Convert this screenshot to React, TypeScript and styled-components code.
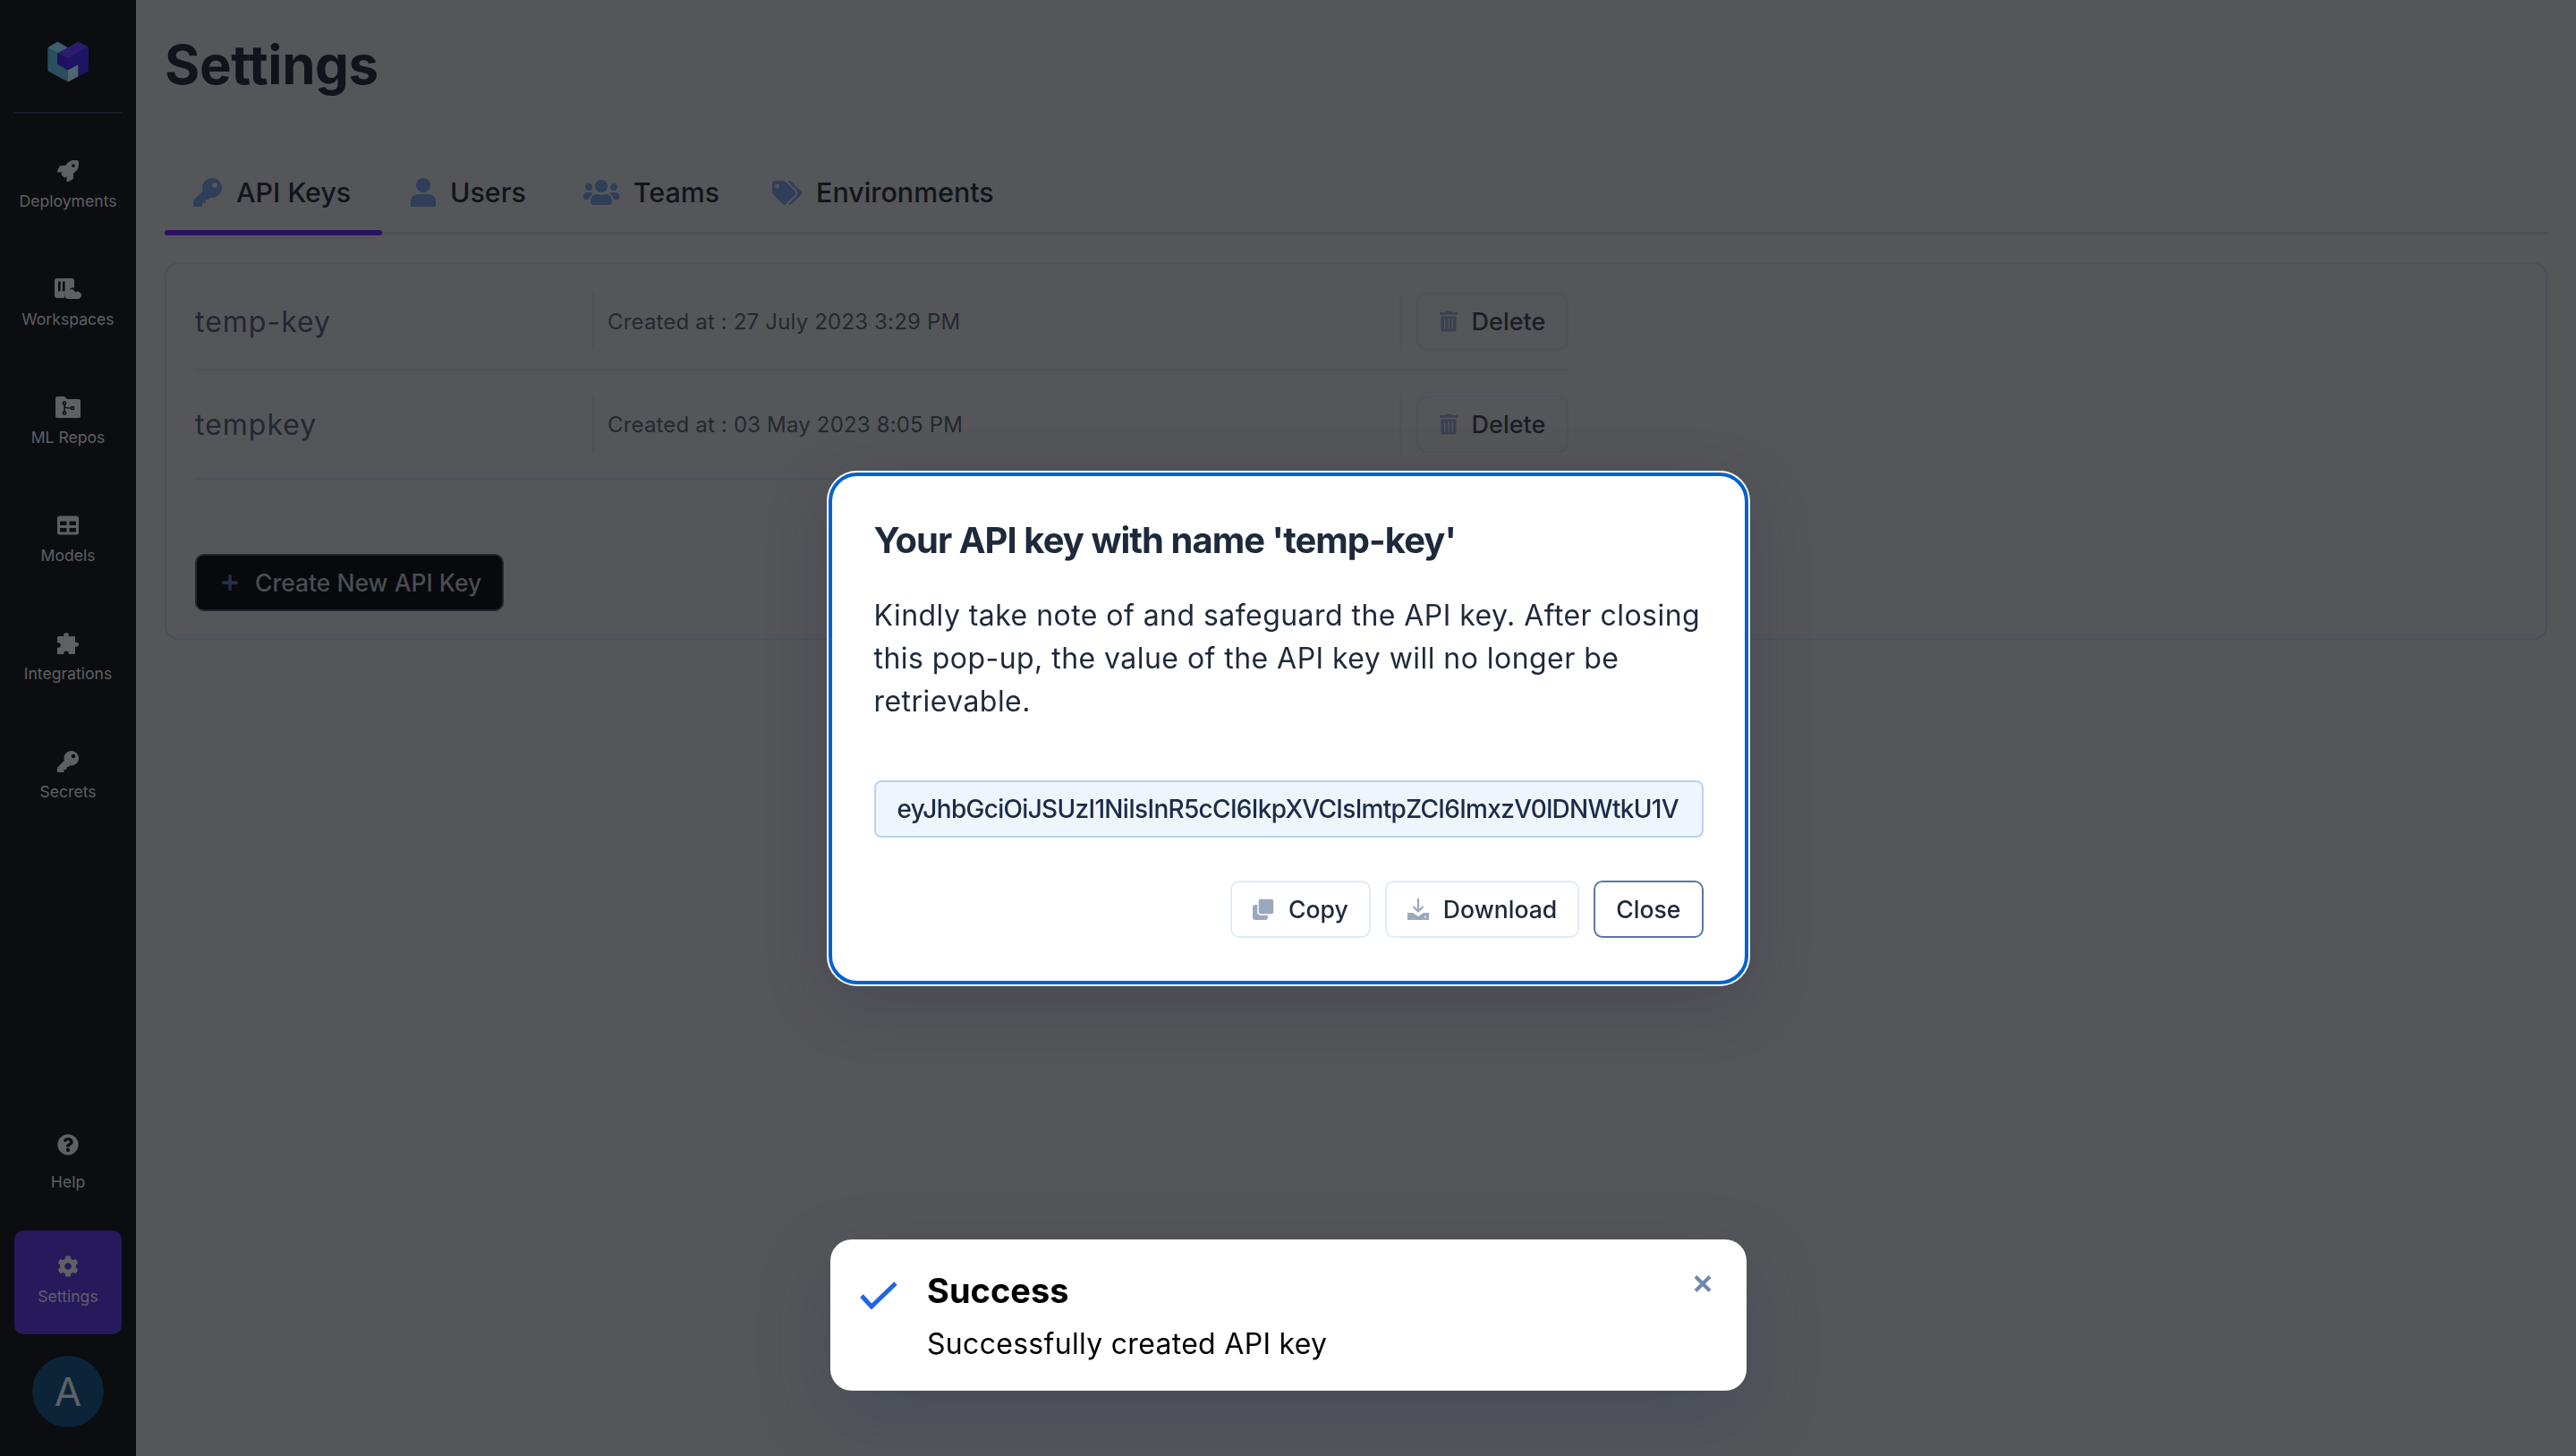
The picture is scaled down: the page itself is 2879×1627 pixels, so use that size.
import React from "react";
import styled, { createGlobalStyle } from "styled-components";
import { FaRocket, FaKey, FaTable, FaQuestionCircle, FaCog, FaUsers, FaTags, FaTrashAlt, FaPlus } from "react-icons/fa";

const Global = createGlobalStyle`
  html, body { margin: 0; padding: 0; height: 100%; background: #55565a; }
  * { box-sizing: border-box; }
  body { font-family: Inter, "Liberation Sans", sans-serif; overflow: hidden; }
`;

const Shell = styled.div`
  display: flex;
  width: 100vw;
  height: 100vh;
  background: #55565a;
`;

const Sidebar = styled.aside`
  width: 152px;
  flex: none;
  display: flex;
  flex-direction: column;
  align-items: center;
  padding: 46px 16px 32px;
  background: #0c0d11;
`;

const LogoMark = styled.svg`
  width: 46px;
  height: 46px;
  flex: none;
`;

const SideRule = styled.div`
  width: 120px;
  height: 2px;
  margin: 33px 0 24px;
  background: #171c27;
  flex: none;
`;

const NavGroup = styled.nav`
  display: flex;
  flex-direction: column;
  gap: 16px;
`;

const NavItem = styled.a<{ $active?: boolean; $gap?: number }>`
  width: 120px;
  height: 116px;
  padding-top: 28px;
  display: flex;
  flex-direction: column;
  align-items: center;
  gap: ${(p) => p.$gap ?? 11}px;
  border-radius: 10px;
  color: #5f6064;
  font-size: 17.6px;
  line-height: 22px;
  background: ${(p) => (p.$active ? "#261a5d" : "transparent")};
  svg { height: 24px; width: auto; flex: none; display: block; }
`;

const BottomGroup = styled.div`
  margin-top: auto;
  display: flex;
  flex-direction: column;
  align-items: center;
  gap: 20px;
`;

const Avatar = styled.div`
  width: 80px;
  height: 80px;
  margin-top: 4px;
  border-radius: 50%;
  display: flex;
  align-items: center;
  justify-content: center;
  background: #0c2438;
  color: #5e6266;
  font-size: 44px;
  font-weight: 400;
`;

const Main = styled.main`
  flex: 1;
  min-width: 0;
  padding: 0 32px;
`;

const Title = styled.h1`
  margin: 0;
  padding-top: 36px;
  font-size: 60px;
  line-height: 72px;
  font-weight: 700;
  color: #12141c;
  letter-spacing: -0.4px;
`;

const TabBar = styled.div`
  display: flex;
  margin-top: 71px;
  height: 82px;
  border-bottom: 2px solid #4a5058;
`;

const Tab = styled.div<{ $active?: boolean; $endPad?: number }>`
  display: flex;
  align-items: center;
  gap: 16px;
  height: 82px;
  min-width: ${(p) => (p.$active ? "243px" : "0")};
  padding: 0 ${(p) => p.$endPad ?? 32}px 10px 32px;
  font-size: 30.4px;
  font-weight: 500;
  color: #12141c;
  position: relative;
  svg { color: #2f3e59; flex: none; display: block; }
  ${(p) =>
    p.$active
      ? `&::after { content: ""; position: absolute; left: 0; right: 0; bottom: -2px; height: 6px; border-radius: 3px; background: #2a1262; }`
      : ""}
`;

const Card = styled.section`
  margin-top: 32px;
  height: 422px;
  border: 2px solid #49515b;
  border-radius: 16px;
  padding: 11px 32px 0;
`;

const KeyRow = styled.div<{ $h: number }>`
  display: flex;
  align-items: center;
  width: 1535px;
  height: ${(p) => p.$h}px;
  border-bottom: 2px solid #4c525b;
`;

const KeyName = styled.div`
  width: 444px;
  font-size: 32px;
  color: #232733;
  letter-spacing: 1px;
`;

const Created = styled.div`
  width: 904px;
  height: 64px;
  display: flex;
  align-items: center;
  padding-left: 15px;
  border-left: 2px solid #4d535c;
  border-right: 2px solid #4d535c;
  font-size: 24px;
  color: #25282f;
  letter-spacing: 0.17px;
`;

const DeleteButton = styled.div`
  width: 170px;
  height: 64px;
  margin-left: 17px;
  display: flex;
  align-items: center;
  justify-content: center;
  gap: 16px;
  border: 2px solid #4d535c;
  border-radius: 12px;
  font-size: 27px;
  font-weight: 500;
  color: #1b1d26;
  svg { width: 20px; height: 24px; color: #3a4150; }
`;

const CreateButton = styled.div`
  margin-top: 83px;
  width: 345px;
  height: 64px;
  display: flex;
  align-items: center;
  gap: 18px;
  padding-left: 27px;
  background: #08090c;
  border: 2px solid #22252e;
  border-radius: 10px;
  color: #4a4d52;
  font-size: 26.5px;
  font-weight: 500;
  svg { width: 20px; height: 20px; color: #252e45; flex: none; }
`;

const Overlay = styled.div`
  position: fixed;
  inset: 0;
  display: flex;
  align-items: center;
  justify-content: center;
`;

const Modal = styled.div`
  width: 1028px;
  height: 572px;
  padding: 48px 46px 0 47px;
  background: #fff;
  border: 4px solid #0062d1;
  border-radius: 32px;
  outline: 2px solid #fff;
  box-shadow: 0 20px 70px rgba(20, 30, 50, 0.22);
`;

const ModalTitle = styled.h2`
  margin: 0;
  font-size: 40px;
  line-height: 48px;
  font-weight: 700;
  color: #1e293b;
  letter-spacing: -0.97px;
`;

const ModalText = styled.p`
  margin: 36px 0 0;
  font-size: 32px;
  line-height: 48px;
  color: #1e293b;
  letter-spacing: 0.45px;
`;

const KeyField = styled.div`
  margin-top: 64px;
  height: 64px;
  padding: 0 24px;
  display: flex;
  align-items: center;
  background: #eef5fd;
  border: 2px solid #b9d3f0;
  border-radius: 8px;
  font-size: 28px;
  font-weight: 500;
  color: #1d2b49;
  letter-spacing: -0.7px;
  white-space: nowrap;
  overflow: hidden;
`;

const ActionRow = styled.div`
  margin-top: 48px;
  display: flex;
  justify-content: flex-end;
  gap: 16px;
`;

const ActionButton = styled.div<{ $primary?: boolean }>`
  height: 64px;
  padding: 0 23px;
  display: flex;
  align-items: center;
  gap: 16px;
  border: 2px solid ${(p) => (p.$primary ? "#5877a8" : "#dfebfa")};
  border-radius: 10px;
  font-size: 26.6px;
  font-weight: 500;
  color: #1e293b;
  svg { width: 24px; height: 24px; flex: none; }
`;

const Toast = styled.div`
  position: fixed;
  left: 928px;
  top: 1385px;
  width: 1024px;
  height: 169px;
  display: flex;
  padding: 34px 32px;
  gap: 32px;
  background: #fff;
  border-radius: 24px;
  box-shadow: 0 30px 80px rgba(30, 50, 80, 0.25);
`;

const ToastBody = styled.div`
  flex: 1;
  color: #000;
`;

const ToastTitle = styled.div`
  font-size: 38px;
  line-height: 46px;
  font-weight: 700;
`;

const ToastText = styled.div`
  margin-top: 17px;
  font-size: 32px;
  line-height: 40px;
  letter-spacing: 0.3px;
`;

const ToastClose = styled.svg`
  position: absolute;
  right: 38px;
  top: 39px;
  width: 22px;
  height: 21px;
  display: block;
`;

const CheckMark = styled.svg`
  width: 44px;
  height: 32px;
  margin-top: 12px;
  flex: none;
`;

const Logo = () => (
  <LogoMark viewBox="159 139 138 137">
    <polygon points="160,160 193,140 228,160 193,180" fill="#3e5f6e" />
    <polygon points="160,160 193,180 193,215 228,235 228,275 160,238" fill="#2a4d60" />
    <polygon points="193,180 262,140 297,157 228,198" fill="#2b1c6d" />
    <polygon points="193,180 228,198 228,235 193,215" fill="#1e1260" />
    <polygon points="228,198 297,157 297,238 262,257 262,217 228,235" fill="#1f1363" />
    <polygon points="228,235 262,217 262,257 228,275" fill="#51666f" />
  </LogoMark>
);

const WorkspaceIcon = () => (
  <svg viewBox="0 0 30 24">
    <path fill="currentColor" d="M3 0h16a3 3 0 0 1 3 3v7.5a7 7 0 0 0-7.3 5.2A5 5 0 0 0 11 22H3a3 3 0 0 1-3-3V3a3 3 0 0 1 3-3z" />
    <rect x="4" y="3.5" width="2.6" height="11" fill="#0c0d11" />
    <rect x="9" y="3.5" width="2.6" height="11" fill="#0c0d11" />
    <path fill="currentColor" d="M18 12a5.5 5.5 0 0 1 5.2 3.8A4.2 4.2 0 0 1 30 19.6 4.3 4.3 0 0 1 25.7 23H15a4 4 0 0 1-1-7.8A5.4 5.4 0 0 1 18 12z" />
  </svg>
);

const RepoIcon = () => (
  <svg viewBox="0 0 28 24">
    <path fill="currentColor" d="M2 0h8l3 3h13a2 2 0 0 1 2 2v17a2 2 0 0 1-2 2H2a2 2 0 0 1-2-2V2a2 2 0 0 1 2-2z" />
    <g fill="none" stroke="#0c0d11" strokeWidth="1.5">
      <circle cx="10" cy="7.5" r="1.6" />
      <circle cx="10" cy="18.5" r="1.6" />
      <circle cx="19" cy="13" r="1.6" />
      <path d="M10 9v8M10 10c0 3 3 3 7.4 3" />
    </g>
  </svg>
);

const PuzzleIcon = () => (
  <svg viewBox="0 0 24 24">
    <rect x="0" y="4" width="20" height="20" rx="1" fill="currentColor" />
    <circle cx="10" cy="2.8" r="2.8" fill="currentColor" />
    <circle cx="21.4" cy="13" r="2.6" fill="currentColor" />
    <circle cx="1" cy="14" r="2.8" fill="#0c0d11" />
    <circle cx="10" cy="23.2" r="2.8" fill="#0c0d11" />
  </svg>
);

const UserIcon = () => (
  <svg viewBox="0 0 28 32" width="28" height="32">
    <ellipse cx="14" cy="8" rx="8" ry="8" fill="currentColor" />
    <path fill="currentColor" d="M8 18h12a8 8 0 0 1 8 8v6H0v-6a8 8 0 0 1 8-8z" />
  </svg>
);

const CopyIcon = () => (
  <svg viewBox="0 0 24 24">
    <rect x="0" y="7" width="17" height="17" rx="3" fill="#9aa8bf" />
    <rect x="6" y="0" width="18" height="18" rx="3" fill="#9aa8bf" stroke="#fff" strokeWidth="1.5" />
  </svg>
);

const DownloadIcon = () => (
  <svg viewBox="0 0 24 24">
    <path d="M12 0v14M6.5 9l5.5 5.5L17.5 9" fill="none" stroke="#9aa8bf" strokeWidth="2.2" />
    <path d="M0 16h6l6 4 6-4h6v8H0z" fill="#9aa8bf" />
    <circle cx="20" cy="20.5" r="1" fill="#fff" />
  </svg>
);

const navTop = [
  { label: "Deployments", icon: <FaRocket /> },
  { label: "Workspaces", icon: <WorkspaceIcon /> },
  { label: "ML Repos", icon: <RepoIcon /> },
  { label: "Models", icon: <FaTable /> },
  { label: "Integrations", icon: <PuzzleIcon /> },
  { label: "Secrets", icon: <FaKey /> },
];

const keys = [
  { name: "temp-key", created: "Created at : 27 July 2023 3:29 PM", h: 108 },
  { name: "tempkey", created: "Created at : 03 May 2023 8:05 PM", h: 122 },
];

export default function App() {
  return (
    <>
      <Global />
      <Shell>
        <Sidebar>
          <Logo />
          <SideRule />
          <NavGroup>
            {navTop.map((n) => (
              <NavItem key={n.label}>
                {n.icon}
                <span>{n.label}</span>
              </NavItem>
            ))}
          </NavGroup>
          <BottomGroup>
            <NavItem $gap={19}>
              <FaQuestionCircle />
              <span>Help</span>
            </NavItem>
            <NavItem $active>
              <FaCog />
              <span>Settings</span>
            </NavItem>
            <Avatar>A</Avatar>
          </BottomGroup>
        </Sidebar>
        <Main>
          <Title>Settings</Title>
          <TabBar>
            <Tab $active><FaKey size={32} />API Keys</Tab>
            <Tab><UserIcon />Users</Tab>
            <Tab $endPad={27}><FaUsers size={40} />Teams</Tab>
            <Tab><FaTags size={33} />Environments</Tab>
          </TabBar>
          <Card>
            {keys.map((k) => (
              <KeyRow key={k.name} $h={k.h}>
                <KeyName>{k.name}</KeyName>
                <Created>{k.created}</Created>
                <DeleteButton><FaTrashAlt />Delete</DeleteButton>
              </KeyRow>
            ))}
            <CreateButton><FaPlus />Create New API Key</CreateButton>
          </Card>
        </Main>
      </Shell>
      <Overlay>
        <Modal>
          <ModalTitle>Your API key with name 'temp-key'</ModalTitle>
          <ModalText>
            Kindly take note of and safeguard the API key. After closing this pop-up, the value of the API key will no longer be retrievable.
          </ModalText>
          <KeyField>eyJhbGciOiJSUzI1NiIsInR5cCI6IkpXVCIsImtpZCI6ImxzV0lDNWtkU1V</KeyField>
          <ActionRow>
            <ActionButton><CopyIcon />Copy</ActionButton>
            <ActionButton><DownloadIcon />Download</ActionButton>
            <ActionButton $primary>Close</ActionButton>
          </ActionRow>
        </Modal>
      </Overlay>
      <Toast>
        <CheckMark viewBox="0 0 44 32">
          <path d="M3 17l11 12L41 3" fill="none" stroke="#2065e0" strokeWidth="5" />
        </CheckMark>
        <ToastBody>
          <ToastTitle>Success</ToastTitle>
          <ToastText>Successfully created API key</ToastText>
        </ToastBody>
        <ToastClose viewBox="0 0 22 21">
          <path d="M3 2.5l16 16M19 2.5l-16 16" stroke="#6f88ad" strokeWidth="4" fill="none" />
        </ToastClose>
      </Toast>
    </>
  );
}
